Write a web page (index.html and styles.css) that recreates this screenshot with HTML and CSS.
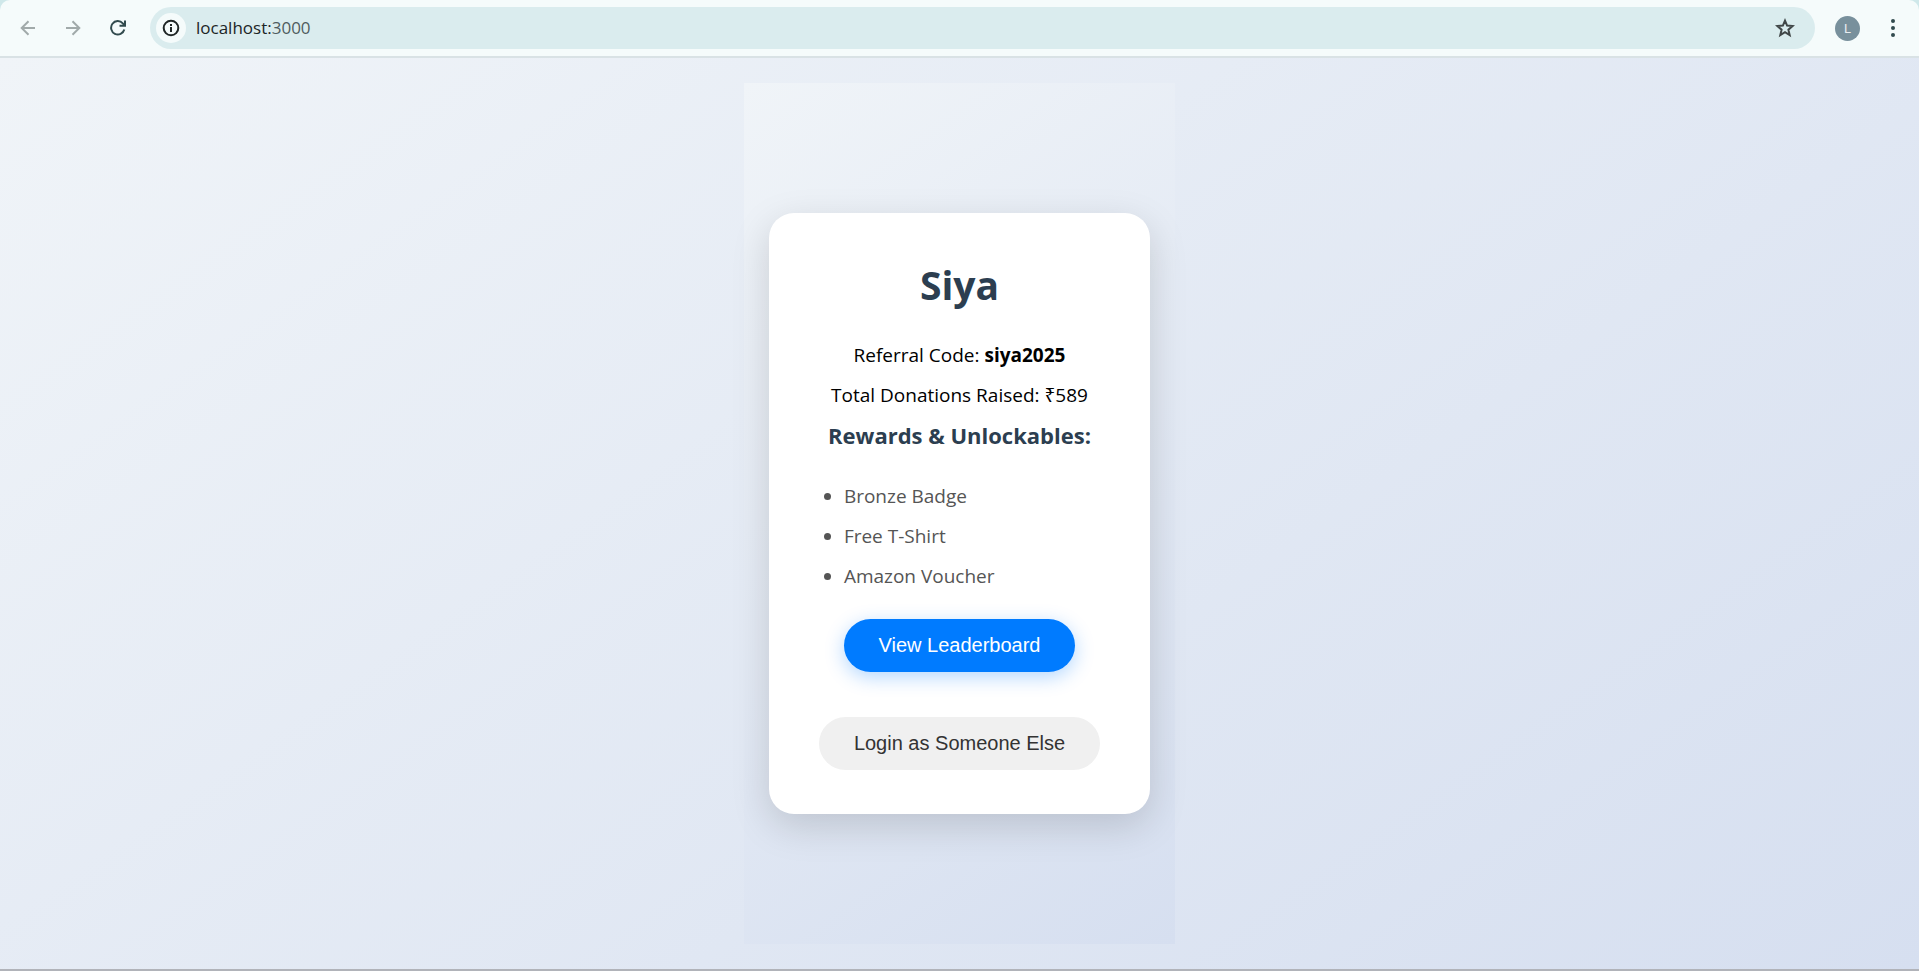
FILE: index.html
```html
<!DOCTYPE html>
<html lang="en">
<head>
<meta charset="utf-8">
<title>localhost:3000</title>
<link rel="stylesheet" href="styles.css">
</head>
<body>
<div class="window">
  <header class="toolbar">
    <nav class="nav">
      <button class="icon-btn muted" aria-label="Back"><svg width="16" height="16" viewBox="0 0 16 16"><path d="M15 8H2M8.5 1.2 1.7 8l6.8 6.8"/></svg></button>
      <button class="icon-btn muted" aria-label="Forward"><svg width="16" height="16" viewBox="0 0 16 16"><path d="M1 8h13M7.500 1.200 14.300 8l-6.800 6.800"/></svg></button>
      <button class="icon-btn dark" aria-label="Reload"><svg width="16" height="16" viewBox="0 0 16 16"><path d="M14.300 9.500A6.700 6.700 0 1 1 12.800 3.300L14.500 5.200M15 .5v5.300H9.500"/></svg></button>
    </nav>
    <div class="omnibox">
      <button class="site-info" aria-label="Site information"><svg width="18" height="18" viewBox="0 0 18 18"><circle cx="9" cy="9" r="7.300"/><path d="M9 8v5M9 5v2"/></svg></button>
      <div class="address" aria-label="Address">localhost:<span class="port">3000</span></div>
      <button class="icon-btn star" aria-label="Bookmark"><svg width="20" height="20" viewBox="0 0 20 20"><path d="m10 2.600 2.100 5 5.500.5-4.200 3.600 1.300 5.400L10 14.200l-4.700 2.900 1.300-5.400-4.200-3.600 5.500-.5z"/></svg></button>
    </div>
    <button class="avatar" aria-label="Profile">L</button>
    <button class="icon-btn menu" aria-label="Menu"><svg width="6" height="20" viewBox="0 0 6 20"><circle cx="3" cy="3" r="2"/><circle cx="3" cy="10" r="2"/><circle cx="3" cy="17" r="2"/></svg></button>
  </header>
  <main class="page">
    <div class="panel">
      <section class="card">
        <h1 class="name">Siya</h1>
        <p class="line">Referral Code: <strong>siya2025</strong></p>
        <p class="line">Total Donations Raised: ₹589</p>
        <h2 class="subtitle">Rewards &amp; Unlockables:</h2>
        <ul class="rewards">
          <li>Bronze Badge</li>
          <li>Free T-Shirt</li>
          <li>Amazon Voucher</li>
        </ul>
        <div class="actions">
          <button class="btn primary">View Leaderboard</button>
          <button class="btn secondary">Login as Someone Else</button>
        </div>
      </section>
    </div>
  </main>
</div>
</body>
</html>
```
FILE: styles.css
```css
* { box-sizing: border-box; }
body {
  margin: 0;
  background: #cfe8ea;
  font-family: "Segoe UI", "Open Sans", "Noto Sans", sans-serif;
}
button {
  border: 0;
  padding: 0;
  background: none;
  cursor: pointer;
}
.window {
  display: flex;
  flex-direction: column;
  min-height: 100vh;
  border-bottom: 2px solid #b1b3b9;
}
.toolbar {
  display: flex;
  align-items: center;
  padding: 7px 12px 7px 10px;
  background: #f5fbfb;
  border-bottom: 2px solid #d9e2e5;
  border-radius: 10px 10px 0 0;
}
.nav {
  display: flex;
  gap: 9px;
  margin-right: 14px;
}
.icon-btn {
  display: grid;
  place-items: center;
  width: 36px;
  height: 36px;
}
.icon-btn svg,
.site-info svg {
  fill: none;
  stroke: currentColor;
  stroke-width: 2;
}
.muted { color: #a1aaaa; }
.dark { color: #324b4e; }
.omnibox {
  display: flex;
  flex: 1;
  align-items: center;
  height: 42px;
  padding: 0 12px 0 6px;
  border-radius: 21px;
  background: #daecee;
}
.site-info {
  display: grid;
  place-items: center;
  width: 30px;
  height: 30px;
  border-radius: 50%;
  background: #f5fbfb;
  color: #1f2626;
}
.address {
  flex: 1;
  padding-left: 10px;
  font-size: 17px;
  line-height: 24px;
  color: #1c2526;
}
.port { color: #4f5c5e; }
.star { color: #414748; }
.avatar {
  width: 25px;
  height: 25px;
  margin: 0 19px 0 20px;
  border-radius: 50%;
  background: #78909c;
  color: #e8eef1;
  font: 13px/25px Roboto, sans-serif;
}
.menu svg {
  fill: #324b4e;
  stroke: none;
}
.icon-btn.menu { width: 28px; }
.page {
  display: flex;
  flex: 1;
  justify-content: center;
  padding: 25px;
  background: linear-gradient(145deg, #f0f4f8, #d6dff0);
}
.panel {
  display: flex;
  align-items: center;
  padding: 25px;
  background: linear-gradient(145deg, #f0f4f8, #d6dff0);
}
.card {
  padding: 48px 50px 44px;
  border-radius: 25px;
  background: #fff;
  box-shadow: 0 12px 38px rgba(0, 0, 0, 0.15);
  text-align: center;
}
.name {
  margin: 0 0 26px;
  font-size: 39px;
  line-height: 48px;
  color: #2c3e50;
}
.line {
  margin: 0;
  font-size: 19px;
  line-height: 40px;
  color: #000;
}
.subtitle {
  margin: 0 0 21px;
  font-size: 22px;
  line-height: 40px;
  color: #2c3e50;
}
.rewards {
  margin: 0 0 23px;
  padding-left: 25px;
  font-size: 19px;
  line-height: 40px;
  text-align: left;
  color: #555;
}
.actions {
  display: flex;
  flex-direction: column;
  align-items: center;
  gap: 45px;
}
.btn {
  padding: 15px 35px;
  border-radius: 27px;
  font: 20px/23px "Liberation Sans", Arial, sans-serif;
}
.primary {
  background: #007bff;
  color: #fff;
  box-shadow: 0 5px 19px rgba(0, 123, 255, 0.3);
}
.secondary {
  background: #f0f0f0;
  color: #333;
}
```
